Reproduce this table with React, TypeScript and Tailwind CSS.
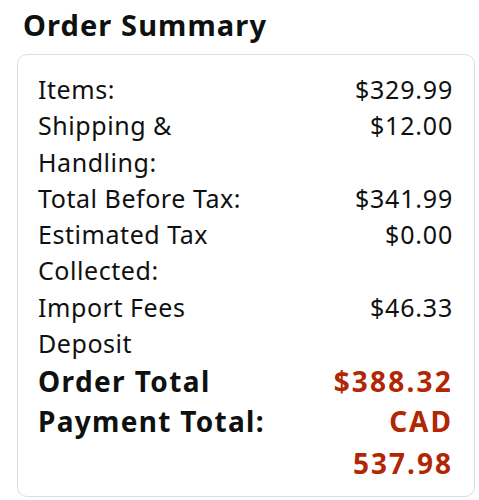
import React from "react";

const rows: { label: string; value: string }[] = [
  { label: "Items:", value: "$329.99" },
  { label: "Shipping & Handling:", value: "$12.00" },
  { label: "Total Before Tax:", value: "$341.99" },
  { label: "Estimated Tax Collected:", value: "$0.00" },
  { label: "Import Fees Deposit", value: "$46.33" },
];

export default function App() {
  return (
    <div
      className="w-[479px] h-[500px] bg-white text-[#0f1111] overflow-hidden"
      style={{ fontFamily: '"Noto Sans", "Open Sans", sans-serif' }}
    >
      <h1 className="pl-[23px] pt-[5px] text-[29px] leading-[40px] font-bold tracking-[1.1px]">Order Summary</h1>
      <div className="mx-[17px] mt-[9px] w-[458px] rounded-[10px] border border-[#dddddd] pl-[20px] pr-[21px] pt-[16px] pb-[12px]">
        {rows.map((r) => (
          <div key={r.label} className="flex justify-between text-[25px] leading-[36.3px] tracking-[0.55px]">
            <div className="w-[235px]">{r.label}</div>
            <div className="text-right tracking-[0.8px]">{r.value}</div>
          </div>
        ))}
        <div className="flex justify-between text-[28px] leading-[38px] font-bold mt-[1px]">
          <div className="w-[260px] tracking-[1.4px]">Order Total</div>
          <div className="text-right text-[#b12704] tracking-[2.2px]">$388.32</div>
        </div>
        <div className="flex justify-between text-[28px] leading-[42px] font-bold">
          <div className="w-[260px] tracking-[1.3px]">Payment Total:</div>
          <div className="text-right text-[#b12704] w-[120px] tracking-[2px]">CAD 537.98</div>
        </div>
      </div>
    </div>
  );
}
